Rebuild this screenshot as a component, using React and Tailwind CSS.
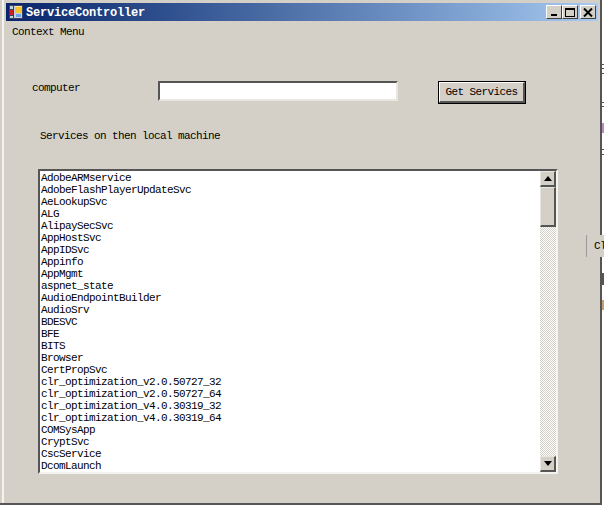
const services = ["AdobeARMservice","AdobeFlashPlayerUpdateSvc","AeLookupSvc","ALG","AlipaySecSvc","AppHostSvc","AppIDSvc","Appinfo","AppMgmt","aspnet_state","AudioEndpointBuilder","AudioSrv","BDESVC","BFE","BITS","Browser","CertPropSvc","clr_optimization_v2.0.50727_32","clr_optimization_v2.0.50727_64","clr_optimization_v4.0.30319_32","clr_optimization_v4.0.30319_64","COMSysApp","CryptSvc","CscService","DcomLaunch"];

function CapButton({ children, className = "" }) {
  return (
    <div className={"w-4 h-[14px] flex items-center justify-center bg-[#d4d0c8] border-t border-l border-t-white border-l-white border-r border-b border-r-[#404040] border-b-[#404040] " + className}>
      {children}
    </div>
  );
}

function ScrollButton({ children }) {
  return (
    <div className="w-[16px] h-[16px] flex items-center justify-center bg-[#d4d0c8] border-t border-l border-t-[#e8e6e0] border-l-[#e8e6e0] border-r-2 border-b-2 border-r-[#555] border-b-[#555]">
      {children}
    </div>
  );
}

export default function App() {
  return (
    <div className="relative w-[604px] h-[505px] bg-white overflow-hidden font-['Liberation_Mono',monospace] text-[11px] tracking-[-0.6px] text-black">
      <div className="w-[602px] h-[505px] bg-[#d4d0c8] border-r-2 border-b-2 border-[#555] flex">
        <div className="w-[2px] ml-[2px] bg-[#f4f3f0]" />
        <div className="flex-1 pl-[2px] pr-[2px] pt-[3px] flex flex-col">
          {/* title bar */}
          <div className="h-[18px] flex items-center bg-gradient-to-r from-[#0a246a] to-[#a6caf0] pl-[3px] pr-[2px]">
            <svg width="14" height="14" viewBox="0 0 14 14" className="shrink-0">
              <rect x="0" y="0" width="14" height="14" fill="#c8d0e0" />
              <rect x="0" y="0" width="14" height="1" fill="#39406a" />
              <rect x="0" y="0" width="1" height="14" fill="#39406a" />
              <rect x="0" y="13" width="14" height="1" fill="#39406a" />
              <rect x="13" y="0" width="1" height="14" fill="#39406a" />
              <rect x="4" y="0" width="1" height="14" fill="#39406a" />
              <rect x="0" y="4" width="5" height="1" fill="#39406a" />
              <rect x="0" y="10" width="5" height="1" fill="#39406a" />
              <rect x="6" y="1" width="7" height="7" fill="#f4c430" />
              <rect x="6" y="1" width="7" height="1" fill="#fbe89a" />
              <rect x="1" y="5" width="3" height="5" fill="#d42020" />
              <rect x="7" y="9" width="5" height="3" fill="#6ea4ea" />
            </svg>
            <span className="ml-[3px] pt-[1px] text-white font-bold text-[12px] tracking-[-0.2px] leading-none">ServiceController</span>
            <div className="ml-auto flex">
              <CapButton>
                <div className="w-[6px] h-[2px] bg-black mt-[6px] -ml-[1px]" />
              </CapButton>
              <CapButton>
                <div className="w-[10px] h-[9px] border border-t-2 border-black" />
              </CapButton>
              <CapButton className="ml-[2px]">
                <svg width="10" height="9" viewBox="0 0 10 9">
                  <path d="M1 0.5 L9 8.5 M9 0.5 L1 8.5" stroke="#000" strokeWidth="2" fill="none" />
                </svg>
              </CapButton>
            </div>
          </div>
          {/* menu */}
          <div className="h-[12px] mt-[5px] leading-[12px] pl-[6px]">Context Menu</div>
          {/* input row */}
          <div className="flex items-start mt-[43px]">
            <div className="ml-[26px] w-[126px] pt-[1px] leading-[12px]">computer</div>
            <div className="w-[240px] h-[20px] bg-white border-2 border-t-[#555] border-l-[#555] border-r-[#e8e6e0] border-b-[#e8e6e0]" />
            <div className="ml-[40px] w-[88px] h-[23px] border border-black bg-[#d4d0c8] flex">
              <div className="flex-1 border-t border-l border-t-white border-l-white border-r-2 border-b-2 border-r-[#555] border-b-[#555] flex items-center justify-center">
                Get Services
              </div>
            </div>
          </div>
          {/* label */}
          <div className="mt-[26px] ml-[34px] leading-[12px]">Services on then local machine</div>
          {/* listbox */}
          <div className="ml-[32px] mt-[27px] w-[520px] h-[305px] bg-white border-2 border-t-[#555] border-l-[#555] border-r-[#f4f3f0] border-b-[#f4f3f0] flex">
            <div className="flex-1 overflow-hidden pt-[1px] pl-[1px]">
              {services.map((s) => (
                <div key={s} className="h-[12px] leading-[12px] whitespace-nowrap">{s}</div>
              ))}
            </div>
            <div className="w-[16px] flex flex-col bg-[repeating-conic-gradient(#d4d0c8_0_25%,#ffffff_0_50%)] bg-[length:2px_2px]">
              <ScrollButton>
                <svg width="8" height="5" viewBox="0 0 8 5"><path d="M4 0 L8 5 L0 5 Z" fill="#000" /></svg>
              </ScrollButton>
              <div className="h-[40px] bg-[#d4d0c8] border-t border-l border-t-[#e8e6e0] border-l-[#e8e6e0] border-r-2 border-b-2 border-r-[#555] border-b-[#555]" />
              <div className="flex-1" />
              <ScrollButton>
                <svg width="8" height="5" viewBox="0 0 8 5"><path d="M0 0 L8 0 L4 5 Z" fill="#000" /></svg>
              </ScrollButton>
            </div>
          </div>
        </div>
      </div>

      {/* desktop remnants behind / over the window edge */}
      <div className="absolute left-[586px] top-[235px] w-[18px] h-[22px] bg-[#d4d0c8] flex items-center">
        <div className="w-[2px] h-[22px] bg-white border-r border-[#9a9a9a]" />
        <span className="ml-[7px] text-[11px]">Cl</span>
      </div>
      <div className="absolute left-[602px] top-[64px] w-[2px] h-[1px] bg-[#555]" />
      <div className="absolute left-[602px] top-[68px] w-[2px] h-[1px] bg-[#555]" />
      <div className="absolute left-[602px] top-[73px] w-[2px] h-[1px] bg-[#555]" />
      <div className="absolute left-[602px] top-[102px] w-[2px] h-[1px] bg-[#555]" />
      <div className="absolute left-[602px] top-[106px] w-[2px] h-[1px] bg-[#555]" />
      <div className="absolute left-[602px] top-[123px] w-[2px] h-[10px] bg-[#b48ac0]" />
      <div className="absolute left-[602px] top-[149px] w-[2px] h-[1px] bg-[#555]" />
      <div className="absolute left-[602px] top-[154px] w-[2px] h-[1px] bg-[#555]" />
      <div className="absolute left-[602px] top-[273px] w-[2px] h-[12px] bg-[#555]" />
      <div className="absolute left-[602px] top-[300px] w-[2px] h-[10px] bg-[#c8a078]" />
    </div>
  );
}
